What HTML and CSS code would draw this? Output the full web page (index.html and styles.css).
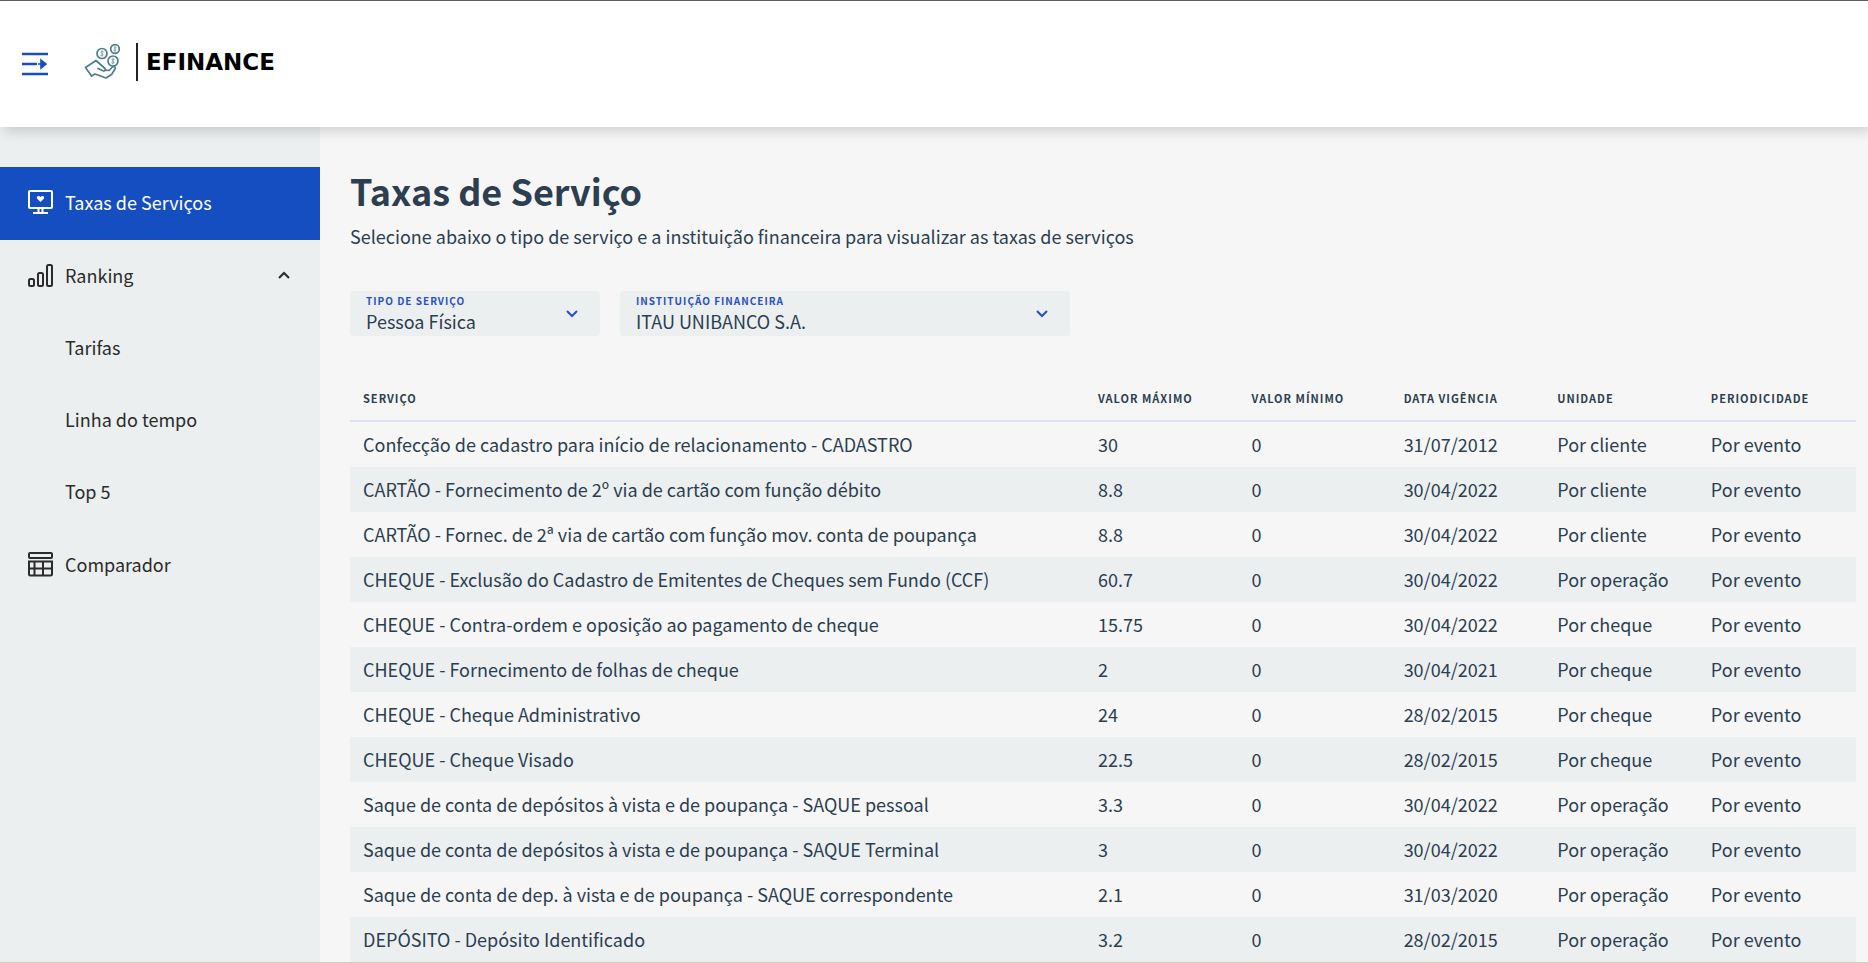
FILE: index.html
```
<!DOCTYPE html>
<html lang="pt-BR">
<head>
<meta charset="utf-8">
<meta name="viewport" content="width=device-width, initial-scale=1">
<title>EFinance - Taxas de Serviço</title>
<link rel="stylesheet" href="styles.css">
</head>
<body>
<div class="app">
  <header class="topbar">
    <button class="menu-toggle" type="button" aria-label="Alternar menu">
      <svg width="26" height="24" viewBox="0 0 26 24" fill="none" stroke="currentColor" stroke-width="2.400"><path d="M0 2h26M0 12h15M0 22h26"/><path d="M16 12h7M19 8l5 4-5 4z" fill="currentColor" stroke-width="1.600"/></svg>
    </button>
    <a class="logo" href="#" aria-label="EFinance">
      <svg class="logo-mark" width="38" height="38" viewBox="0 0 38 38" fill="none" stroke="#4f7d8c" stroke-width="1.700" stroke-linejoin="round" stroke-linecap="round">
        <circle cx="18" cy="10.500" r="5"/><circle cx="31" cy="6" r="4.300"/><circle cx="29" cy="18" r="5"/>
        <g stroke-width=".6"><path d="M19.500 8.800c-2-1.500-4 .8-1.500 1.700s.8 3.300-1.500 1.700M18 7.500v6M32.300 4.600c-1.800-1.300-3.400.7-1.300 1.400s.7 2.700-1.300 1.400M31 3.300v5.400M30.500 16.300c-2-1.500-4 .8-1.500 1.700s.8 3.300-1.500 1.700M29 15v6"/></g>
        <path d="M7.500 33 1.500 24.500 12 17.500l9 8c1.500 1.500 0 3-2 2.300l-5-2.300"/>
        <path d="M21 27l4 .5 3.500-3.500c1.500-1.300 3.500.3 2.500 2l-3.500 5.500L22 35l-11-4-3.500 2"/>
      </svg>
      <span class="logo-name">EFINANCE</span>
    </a>
  </header>
  <div class="body">
    <nav class="sidebar" aria-label="Principal">
      <a class="nav-item active" href="#" aria-current="page">
        <svg width="26" height="26" viewBox="0 0 26 26" fill="none" stroke="currentColor" stroke-width="2" stroke-linejoin="round"><rect x="1" y="2" width="23" height="17" rx="1"/><path d="M10.500 19v5M14.500 19v5M5 24h15"/><path d="M12.500 13l-3.500-3.500c-1-2 1.500-3.500 3.500-1.500 2-2 4.500-.5 3.500 1.500z" fill="currentColor" stroke="none"/></svg>
        <span>Taxas de Serviços</span>
      </a>
      <button class="nav-item" type="button" aria-expanded="true">
        <svg width="26" height="26" viewBox="0 0 26 26" fill="none" stroke="currentColor" stroke-width="2"><rect x="1" y="17" width="5" height="7" rx="1.500"/><rect x="10" y="11" width="5" height="13" rx="1.500"/><rect x="19" y="3" width="5" height="21" rx="1.500"/></svg>
        <span>Ranking</span>
        <svg class="chevron" width="12" height="8" viewBox="0 0 12 8" fill="none" stroke="currentColor" stroke-width="2"><path d="M1 7l5-5 5 5"/></svg>
      </button>
      <a class="nav-item sub" href="#">Tarifas</a>
      <a class="nav-item sub" href="#">Linha do tempo</a>
      <a class="nav-item sub" href="#">Top 5</a>
      <a class="nav-item" href="#">
        <svg width="26" height="26" viewBox="0 0 26 26" fill="none" stroke="currentColor" stroke-width="2"><rect x="1" y="2" width="23" height="5" rx="1"/><path d="M1 10.500h23V23a1.500 1.500 0 0 1-1.500 1.500h-20A1.500 1.500 0 0 1 1 23zM1 17.500h23M6.500 10.500v14M15 10.500v14"/></svg>
        <span>Comparador</span>
      </a>
    </nav>
    <main class="content">
      <h1>Taxas de Serviço</h1>
      <p class="lead">Selecione abaixo o tipo de serviço e a instituição financeira para visualizar as taxas de serviços</p>
      <form class="filters">
        <div class="field field-type">
          <label for="tipo">TIPO DE SERVIÇO</label>
          <select id="tipo"><option>Pessoa Física</option><option>Pessoa Jurídica</option></select>
          <svg width="12" height="8" viewBox="0 0 12 8" fill="none" stroke="currentColor" stroke-width="2"><path d="M1 1l5 5 5-5"/></svg>
        </div>
        <div class="field field-bank">
          <label for="instituicao">INSTITUIÇÃO FINANCEIRA</label>
          <select id="instituicao"><option>ITAU UNIBANCO S.A.</option></select>
          <svg width="12" height="8" viewBox="0 0 12 8" fill="none" stroke="currentColor" stroke-width="2"><path d="M1 1l5 5 5-5"/></svg>
        </div>
      </form>
      <table class="fees">
        <colgroup><col class="c-service"><col class="c-max"><col class="c-min"><col class="c-date"><col class="c-unit"><col class="c-period"></colgroup>
        <thead><tr><th scope="col">SERVIÇO</th><th scope="col">VALOR MÁXIMO</th><th scope="col">VALOR MÍNIMO</th><th scope="col">DATA VIGÊNCIA</th><th scope="col">UNIDADE</th><th scope="col">PERIODICIDADE</th></tr></thead>
        <tbody>
          <tr><td>Confecção de cadastro para início de relacionamento - CADASTRO</td><td>30</td><td>0</td><td>31/07/2012</td><td>Por cliente</td><td>Por evento</td></tr>
          <tr><td>CARTÃO - Fornecimento de 2º via de cartão com função débito</td><td>8.8</td><td>0</td><td>30/04/2022</td><td>Por cliente</td><td>Por evento</td></tr>
          <tr><td>CARTÃO - Fornec. de 2ª via de cartão com função mov. conta de poupança</td><td>8.8</td><td>0</td><td>30/04/2022</td><td>Por cliente</td><td>Por evento</td></tr>
          <tr><td>CHEQUE - Exclusão do Cadastro de Emitentes de Cheques sem Fundo (CCF)</td><td>60.7</td><td>0</td><td>30/04/2022</td><td>Por operação</td><td>Por evento</td></tr>
          <tr><td>CHEQUE - Contra-ordem e oposição ao pagamento de cheque</td><td>15.75</td><td>0</td><td>30/04/2022</td><td>Por cheque</td><td>Por evento</td></tr>
          <tr><td>CHEQUE - Fornecimento de folhas de cheque</td><td>2</td><td>0</td><td>30/04/2021</td><td>Por cheque</td><td>Por evento</td></tr>
          <tr><td>CHEQUE - Cheque Administrativo</td><td>24</td><td>0</td><td>28/02/2015</td><td>Por cheque</td><td>Por evento</td></tr>
          <tr><td>CHEQUE - Cheque Visado</td><td>22.5</td><td>0</td><td>28/02/2015</td><td>Por cheque</td><td>Por evento</td></tr>
          <tr><td>Saque de conta de depósitos à vista e de poupança - SAQUE pessoal</td><td>3.3</td><td>0</td><td>30/04/2022</td><td>Por operação</td><td>Por evento</td></tr>
          <tr><td>Saque de conta de depósitos à vista e de poupança - SAQUE Terminal</td><td>3</td><td>0</td><td>30/04/2022</td><td>Por operação</td><td>Por evento</td></tr>
          <tr><td>Saque de conta de dep. à vista e de poupança - SAQUE correspondente</td><td>2.1</td><td>0</td><td>31/03/2020</td><td>Por operação</td><td>Por evento</td></tr>
          <tr><td>DEPÓSITO - Depósito Identificado</td><td>3.2</td><td>0</td><td>28/02/2015</td><td>Por operação</td><td>Por evento</td></tr>
        </tbody>
      </table>
    </main>
  </div>
</div>
</body>
</html>
```
FILE: styles.css
```
* { box-sizing: border-box; }

body {
  margin: 0;
  background: #f6f6f6;
  color: #2c3e50;
  font-family: "Noto Sans CJK SC", "Noto Sans", sans-serif;
  font-size: 18px;
  line-height: 24px;
}

a { color: inherit; text-decoration: none; }

button, select { font: inherit; color: inherit; border: 0; }

.app {
  display: flex;
  flex-direction: column;
  min-height: 100vh;
  border-top: 1px solid #5f5f66;
  border-bottom: 1px solid #cdd3b8;
}

.topbar {
  position: relative;
  display: flex;
  align-items: center;
  gap: 36px;
  height: 126px;
  padding: 0 22px 4px;
  background: #fff;
  box-shadow: 4px 4px 12px rgba(0, 0, 0, 0.16);
}

.menu-toggle {
  display: flex;
  padding: 4px 0 0;
  background: none;
  color: #154ec1;
}

.logo { display: flex; align-items: center; }

.logo-name {
  display: flex;
  align-items: center;
  height: 38px;
  margin-left: 14px;
  padding-left: 8px;
  border-left: 2px solid #222;
  color: #000;
  font-family: "DejaVu Sans", sans-serif;
  font-size: 23px;
  font-weight: 700;
}

.body { display: flex; flex: 1; }

.sidebar {
  flex: 0 0 320px;
  padding-top: 40px;
  background: #ebeff0;
  color: #2b2b2b;
}

.nav-item {
  display: flex;
  align-items: center;
  gap: 11px;
  width: 100%;
  height: 73px;
  padding: 0 30px 4px 28px;
  background: none;
  text-align: left;
}

.nav-item.active { background: #154ec1; color: #fff; }

.nav-item.sub { height: 72px; padding-left: 65px; }

.chevron { margin-left: auto; }

.content { flex: 1; min-width: 0; padding: 40px 12px 0 30px; }

h1 {
  margin: 0;
  font-size: 36px;
  font-weight: 700;
  line-height: 46px;
}

.lead { margin: 11px 0 0; }

.filters { display: flex; gap: 20px; margin-top: 43px; }

.field {
  display: grid;
  align-items: center;
  height: 45px;
  border-radius: 4px;
  background: #ebeff0;
}

.field-type { width: 250px; }

.field-bank { width: 450px; }

.field label, .field select, .field svg { grid-area: 1 / 1; }

.field label {
  align-self: start;
  padding: 2px 16px 0;
  color: #2a4fc4;
  font-size: 10px;
  font-weight: 700;
  letter-spacing: 1px;
  line-height: 16px;
  pointer-events: none;
}

.field select {
  width: 100%;
  height: 45px;
  padding: 14px 40px 0 16px;
  background: transparent;
  appearance: none;
}

.field svg {
  justify-self: end;
  margin-right: 22px;
  color: #2a4fc4;
  pointer-events: none;
}

.fees {
  width: 100%;
  margin-top: 40px;
  border-collapse: separate;
  border-spacing: 0;
  table-layout: fixed;
}

.c-service { width: 48.8%; }
.c-max, .c-unit, .c-date { width: 10.2%; }
.c-min { width: 10.1%; }
.c-period { width: 10.5%; }

.fees th, .fees td {
  height: 45px;
  padding: 0 13px 2px;
  text-align: left;
  white-space: nowrap;
}

.fees th {
  height: 46px;
  padding-bottom: 0;
  border-bottom: 2px solid #dbe2f2;
  font-size: 11px;
  font-weight: 700;
  letter-spacing: 1px;
}

.fees tbody tr:nth-child(even) { background: #ebeff0; }
```
